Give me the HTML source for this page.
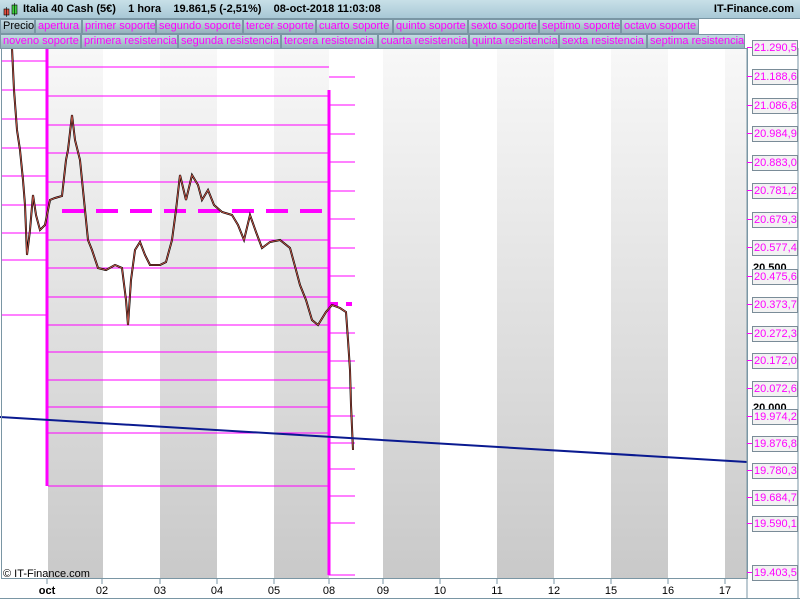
<!DOCTYPE html>
<html><head><meta charset="utf-8"><style>
*{margin:0;padding:0;box-sizing:border-box}
body{width:800px;height:600px;overflow:hidden;background:#fff;font-family:"Liberation Sans",sans-serif;position:relative}
#top{position:absolute;left:0;top:0;width:800px;height:19px;background:linear-gradient(#c8e0e8,#a8c8d6);border-bottom:1px solid #7a96a4}
#top .t{position:absolute;left:23px;top:3px;font-size:11px;font-weight:bold;color:#000;white-space:pre}
#top .r{position:absolute;right:6px;top:3px;font-size:11px;font-weight:bold;color:#000}
.b{position:absolute;height:15px;font-size:11px;line-height:13px;color:#f0f;padding-left:2px;background:linear-gradient(#c4dbe3,#95b0bc);border:1px solid #7a96a4;white-space:nowrap;overflow:hidden}
.lab{position:absolute;left:752px;width:46px;height:16px;border:1px solid #7a8c98;background:#f2f2f2;color:#f0f;font-size:11px;line-height:14px;padding-left:1px;white-space:nowrap;overflow:hidden}
.tick{position:absolute;left:747px;width:5px;height:1px;background:#f0f}
.xl{position:absolute;top:585px;font-size:11px;color:#000;transform:translateX(-50%)}
</style></head><body>
<svg style="position:absolute;left:0;top:0" width="800" height="600">
<defs><linearGradient id="g" x1="0" y1="0" x2="0" y2="1"><stop offset="0" stop-color="#f8f8f8"/><stop offset="1" stop-color="#c9c9c9"/></linearGradient></defs>
<rect x="48" y="48" width="55" height="530" fill="url(#g)"/>
<rect x="160" y="48" width="57" height="530" fill="url(#g)"/>
<rect x="274" y="48" width="55" height="530" fill="url(#g)"/>
<rect x="383" y="48" width="57" height="530" fill="url(#g)"/>
<rect x="497" y="48" width="57" height="530" fill="url(#g)"/>
<rect x="611" y="48" width="57" height="530" fill="url(#g)"/>
<rect x="725" y="48" width="22" height="530" fill="url(#g)"/>
<g stroke="#f0f" stroke-width="1">
<path d="M2 61H48M2 90H48M2 119H48M2 148H48M2 176H48M2 205H48M2 233H48M2 260H48M2 315H48"/>
<path d="M48 67H329M48 96H329M48 125H329M48 153H329M48 182H329M48 240H329M48 268H329M48 297H329M48 325H329M48 352H329M48 380H329M48 407H329M48 433H329M48 486H329"/>
<path d="M329 77H355M329 105H355M329 134H355M329 162H355M329 191H355M329 219H355M329 248H355M329 276H355M329 333H355M329 361H355M329 388H355M329 416H355M329 443H355M329 469H355M329 496H355M329 523H355M329 575H355"/>
</g>
<path d="M47 48V486M329 90V575" stroke="#f0f" stroke-width="3"/>
<path d="M62 211H322" stroke="#f0f" stroke-width="4" stroke-dasharray="22,12"/>
<path d="M329 304H352" stroke="#f0f" stroke-width="4" stroke-dasharray="9,8"/>
<polyline fill="none" stroke="#000" stroke-width="2" points="12,48 14,90 17,130 20,150 23,180 25,205 27,255 30,230 33,195 36,215 40,230 45,225 50,200 55,198 62,196 66,160 68,150 72,115 75,140 80,160 84,200 88,240 92,250 98,268 106,270 115,265 122,268 126,300 128,325 131,280 135,250 140,242 145,255 150,265 160,265 166,262 172,240 176,210 180,175 186,200 192,175 198,185 202,200 208,190 214,205 222,212 232,215 238,225 244,240 250,215 256,232 262,248 270,242 280,240 290,248 296,270 300,285 306,300 312,320 318,325 326,312 332,305 340,308 346,312 348,340 350,370 351,405 353,450"/>
<polyline fill="none" stroke="#e06050" stroke-width="0.8" points="12,48 14,90 17,130 20,150 23,180 25,205 27,255 30,230 33,195 36,215 40,230 45,225 50,200 55,198 62,196 66,160 68,150 72,115 75,140 80,160 84,200 88,240 92,250 98,268 106,270 115,265 122,268 126,300 128,325 131,280 135,250 140,242 145,255 150,265 160,265 166,262 172,240 176,210 180,175 186,200 192,175 198,185 202,200 208,190 214,205 222,212 232,215 238,225 244,240 250,215 256,232 262,248 270,242 280,240 290,248 296,270 300,285 306,300 312,320 318,325 326,312 332,305 340,308 346,312 348,340 350,370 351,405 353,450"/>
<path d="M0 417L747 462" stroke="#0a1a90" stroke-width="2"/>
<rect x="1.5" y="48.5" width="746" height="530" fill="none" stroke="#7a96a4"/>
<path d="M747 48V598M798 48V598M0 598.5H800" stroke="#7a96a4"/>
<g stroke="#7a96a4"><path d="M47 578V584M102 578V584M160 578V584M217 578V584M274 578V584M329 578V584M383 578V584M440 578V584M497 578V584M554 578V584M611 578V584M668 578V584M725 578V584"/></g>
<path d="M329 570V575H352" stroke="#f0f" stroke-width="1" fill="none"/>
</svg>
<div id="top"><svg style="position:absolute;left:3px;top:3px" width="16" height="14"><rect x="1" y="6" width="5" height="6" fill="#e05040" stroke="#000" stroke-width=".6"/><path d="M3.5 4V14" stroke="#000" stroke-width=".6"/><rect x="9" y="2" width="5" height="9" fill="#40d040" stroke="#000" stroke-width=".6"/><path d="M11.5 0V13" stroke="#000" stroke-width=".6"/></svg><span class="t">Italia 40 Cash (5€)    1 hora    19.861,5 (-2,51%)    08-oct-2018 11:03:08</span><span class="r">IT-Finance.com</span></div>
<div class="b" style="left:0;top:19px;width:35px;color:#000">Precio</div>
<div class="b" style="left:35px;top:19px;width:47px">apertura</div>
<div class="b" style="left:82px;top:19px;width:74px">primer soporte</div>
<div class="b" style="left:156px;top:19px;width:87px">segundo soporte</div>
<div class="b" style="left:243px;top:19px;width:73px">tercer soporte</div>
<div class="b" style="left:316px;top:19px;width:77px">cuarto soporte</div>
<div class="b" style="left:393px;top:19px;width:75px">quinto soporte</div>
<div class="b" style="left:468px;top:19px;width:71px">sexto soporte</div>
<div class="b" style="left:539px;top:19px;width:82px">septimo soporte</div>
<div class="b" style="left:621px;top:19px;width:78px">octavo soporte</div>
<div class="b" style="left:0;top:34px;width:81px">noveno soporte</div>
<div class="b" style="left:81px;top:34px;width:97px">primera resistencia</div>
<div class="b" style="left:178px;top:34px;width:103px">segunda resistencia</div>
<div class="b" style="left:281px;top:34px;width:97px">tercera resistencia</div>
<div class="b" style="left:378px;top:34px;width:91px">cuarta resistencia</div>
<div class="b" style="left:469px;top:34px;width:90px">quinta resistencia</div>
<div class="b" style="left:559px;top:34px;width:88px">sexta resistencia</div>
<div class="b" style="left:647px;top:34px;width:98px">septima resistencia</div>
<div style="position:absolute;left:753px;top:262px;font-size:11px;font-weight:bold;height:7px;overflow:hidden">20.500</div>
<div style="position:absolute;left:753px;top:402px;font-size:11px;font-weight:bold;height:7px;overflow:hidden">20.000</div>
<div class="tick" style="top:47px"></div><div class="lab" style="top:40px">21.290,5</div>
<div class="tick" style="top:76px"></div><div class="lab" style="top:69px">21.188,6</div>
<div class="tick" style="top:105px"></div><div class="lab" style="top:98px">21.086,8</div>
<div class="tick" style="top:133px"></div><div class="lab" style="top:126px">20.984,9</div>
<div class="tick" style="top:162px"></div><div class="lab" style="top:155px">20.883,0</div>
<div class="tick" style="top:190px"></div><div class="lab" style="top:183px">20.781,2</div>
<div class="tick" style="top:219px"></div><div class="lab" style="top:212px">20.679,3</div>
<div class="tick" style="top:247px"></div><div class="lab" style="top:240px">20.577,4</div>
<div class="tick" style="top:276px"></div><div class="lab" style="top:269px">20.475,6</div>
<div class="tick" style="top:304px"></div><div class="lab" style="top:297px">20.373,7</div>
<div class="tick" style="top:333px"></div><div class="lab" style="top:326px">20.272,3</div>
<div class="tick" style="top:360px"></div><div class="lab" style="top:353px">20.172,0</div>
<div class="tick" style="top:388px"></div><div class="lab" style="top:381px">20.072,6</div>
<div class="tick" style="top:416px"></div><div class="lab" style="top:409px">19.974,2</div>
<div class="tick" style="top:443px"></div><div class="lab" style="top:436px">19.876,8</div>
<div class="tick" style="top:470px"></div><div class="lab" style="top:463px">19.780,3</div>
<div class="tick" style="top:497px"></div><div class="lab" style="top:490px">19.684,7</div>
<div class="tick" style="top:523px"></div><div class="lab" style="top:516px">19.590,1</div>
<div class="tick" style="top:572px"></div><div class="lab" style="top:565px">19.403,5</div>
<div style="position:absolute;left:3px;top:568px;font-size:11px">© IT-Finance.com</div>
<div class="xl" style="left:47px;font-weight:bold">oct</div>
<div class="xl" style="left:102px">02</div><div class="xl" style="left:160px">03</div><div class="xl" style="left:217px">04</div><div class="xl" style="left:274px">05</div><div class="xl" style="left:329px">08</div><div class="xl" style="left:383px">09</div><div class="xl" style="left:440px">10</div><div class="xl" style="left:497px">11</div><div class="xl" style="left:554px">12</div><div class="xl" style="left:611px">15</div><div class="xl" style="left:668px">16</div><div class="xl" style="left:725px">17</div>
</body></html>
